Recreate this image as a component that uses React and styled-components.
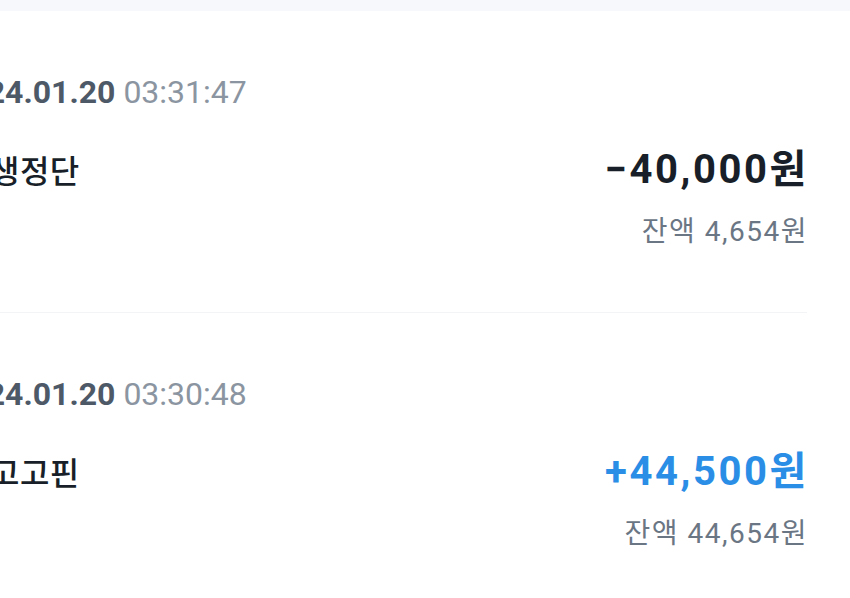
import React from 'react'
import styled, { createGlobalStyle } from 'styled-components';

const GlobalStyle = createGlobalStyle`
  html, body {
    margin: 0;
    padding: 0;
    background: #ffffff;
    overflow: hidden;
  }
  body {
    font-family: Roboto, "Noto Sans CJK KR", "Noto Sans", sans-serif;
    -webkit-font-smoothing: antialiased;
  }
`;

const Screen = styled.div`
  width: 850px;
  height: 598px;
  overflow: hidden;
  background: #ffffff;
`;

const TopBand = styled.div`
  height: 11px;
  background: #f7f8fb;
`;

// the list is wider than the viewport: its left part is cropped off
const List = styled.div`
  margin-left: -83px;
  width: 933px;
  display: flex;
  flex-direction: column;
`;

const Row = styled.div`
  margin: 0 43px;
  padding: 63px 0 63px;
  display: flex;
  flex-direction: column;
  border-bottom: 1px solid ${({ last }) => (last ? 'transparent' : '#f2f4f6')};
`;

const DateLine = styled.div`
  margin-left: -10px;
  font-size: 32px;
  line-height: 36px;
  white-space: nowrap;
  color: #8b95a1;
`;

const DateStrong = styled.span`
  font-weight: 700;
  color: #4e5968;
`;

const Body = styled.div`
  margin-top: 36px;
  display: flex;
  justify-content: space-between;
  align-items: baseline;
`;

const Name = styled.div`
  font-size: 32px;
  font-weight: 500;
  letter-spacing: 0.5px;
  color: #191f28;
  white-space: nowrap;
`;

const AmountCol = styled.div`
  display: flex;
  flex-direction: column;
  align-items: flex-end;
`;

const Amount = styled.div`
  font-size: 40px;
  line-height: 48px;
  font-weight: 700;
  letter-spacing: 2.6px;
  margin-right: -2px;
  color: ${({ income }) => (income ? '#2b8ee6' : '#191f28')};
  white-space: nowrap;
`;

const Balance = styled.div`
  margin-top: 21px;
  margin-right: -1px;
  font-size: 28px;
  line-height: 34px;
  letter-spacing: 1.5px;
  color: #6b7684;
  white-space: nowrap;
`;

const items = [
  { date: '2024.01.20', time: '03:31:47', name: '학생정단', amount: '−40,000원', income: false, balance: '잔액 4,654원' },
  { date: '2024.01.20', time: '03:30:48', name: '포고고핀', amount: '+44,500원', income: true, balance: '잔액 44,654원' },
];

const App = () => {
  return (
    <Screen>
      <GlobalStyle />
      <TopBand />
      <List>
        {items.map((item, i) => (
          <Row key={item.time} last={i === items.length - 1}>
            <DateLine>
              <DateStrong>{item.date}</DateStrong> {item.time}
            </DateLine>
            <Body>
              <Name>{item.name}</Name>
              <AmountCol>
                <Amount income={item.income}>{item.amount}</Amount>
                <Balance>{item.balance}</Balance>
              </AmountCol>
            </Body>
          </Row>
        ))}
      </List>
    </Screen>
  )
}

export default App;
